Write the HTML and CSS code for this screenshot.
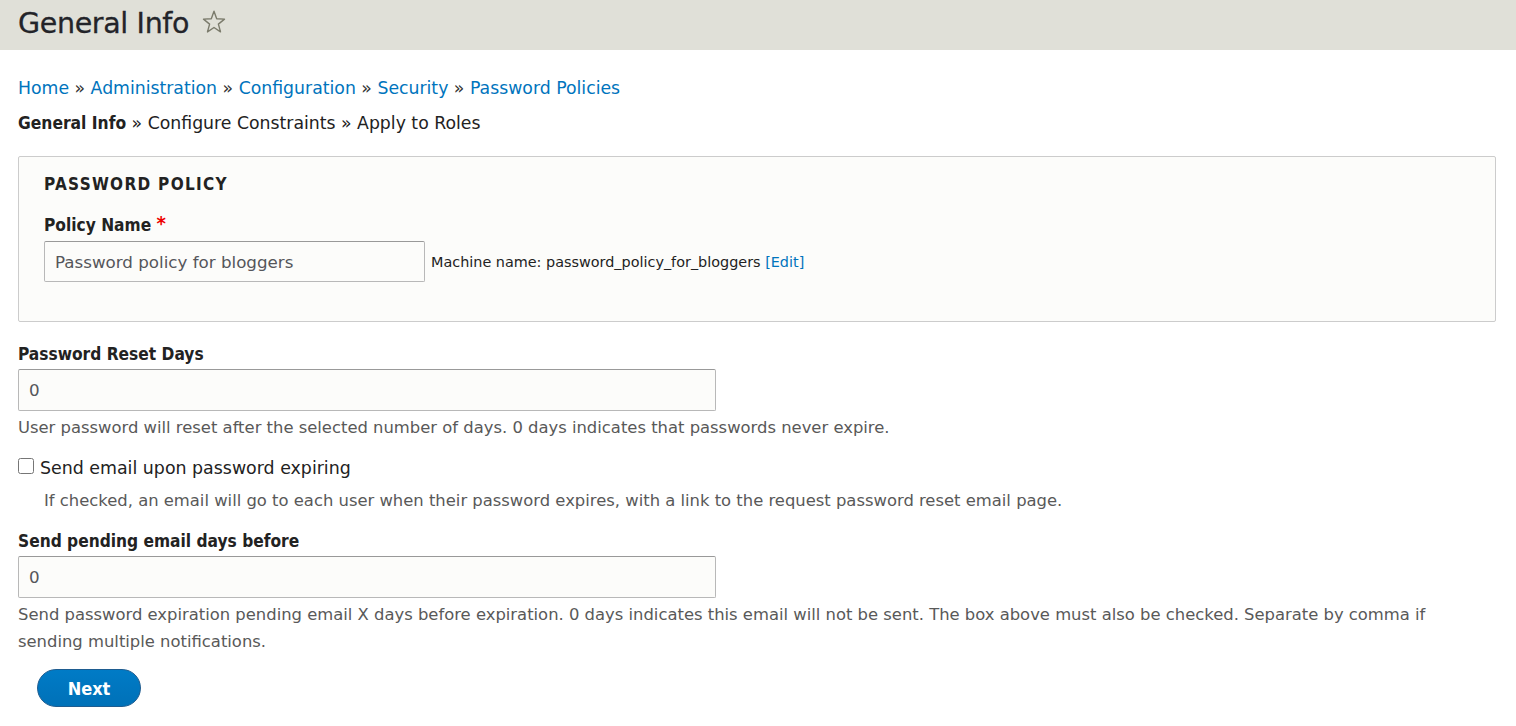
FILE: index.html
```html
<!DOCTYPE html>
<html lang="en">
<head>
<meta charset="utf-8">
<title>General Info</title>
<link rel="stylesheet" href="styles.css">
</head>
<body>
<header class="page-header">
  <h1 class="page-title">General Info</h1>
  <svg class="star" width="26" height="26" viewBox="0 0 26 26" aria-hidden="true">
    <path d="M13 2.2 L15.7 9.7 L23.5 10.1 L17.4 15.1 L19.5 22.9 L13 18.5 L6.5 22.9 L8.6 15.1 L2.5 10.1 L10.3 9.7 Z" fill="none" stroke="#7b7b6c" stroke-width="1.4" stroke-linejoin="round"/>
  </svg>
</header>
<main class="content">
  <nav class="breadcrumb">
    <a href="#">Home</a> » <a href="#">Administration</a> » <a href="#">Configuration</a> » <a href="#">Security</a> » <a href="#">Password Policies</a>
  </nav>
  <div class="steps"><strong>General Info</strong> » Configure Constraints » Apply to Roles</div>

  <section class="fieldset">
    <div class="legend">Password Policy</div>
    <label class="label">Policy Name <span class="req">*</span></label>
    <div class="machine-row">
      <input class="text-input short" type="text" value="Password policy for bloggers">
      <span class="machine">Machine name: password_policy_for_bloggers <a href="#">[Edit]</a></span>
    </div>
  </section>

  <div class="field">
    <label class="label">Password Reset Days</label>
    <input class="text-input wide" type="text" value="0">
    <div class="description">User password will reset after the selected number of days. 0 days indicates that passwords never expire.</div>
  </div>

  <div class="field check-field">
    <label class="check-label"><input type="checkbox" class="checkbox"> Send email upon password expiring</label>
    <div class="description indent">If checked, an email will go to each user when their password expires, with a link to the request password reset email page.</div>
  </div>

  <div class="field pending">
    <label class="label">Send pending email days before</label>
    <input class="text-input wide" type="text" value="0">
    <div class="description">Send password expiration pending email X days before expiration. 0 days indicates this email will not be sent. The box above must also be checked. Separate by comma if sending multiple notifications.</div>
  </div>

  <div class="actions">
    <button class="button" type="button">Next</button>
  </div>
</main>
</body>
</html>
```

FILE: styles.css
```css
html, body {
  margin: 0;
  padding: 0;
  background: #fff;
}
body {
  font-family: "DejaVu Sans", "Liberation Sans", sans-serif;
  color: #222330;
  font-size: 17.3px;
}
.page-header {
  background: #e0e0d8;
  height: 50px;
  display: flex;
  align-items: center;
  padding-left: 18px;
  box-sizing: border-box;
}
.page-title {
  margin: 0;
  font-size: 28.5px;
  font-weight: normal;
  letter-spacing: -0.35px;
  color: #232429;
  line-height: 1;
  padding-bottom: 2px;
  -webkit-text-stroke: 0.3px #232429;
}
.star {
  margin-left: 12px;
  margin-bottom: 6px;
}
.content {
  padding: 0 20px 0 18px;
}
a {
  color: #0074bd;
  text-decoration: none;
}
.breadcrumb {
  margin-top: 26px;
  line-height: 24px;
  color: #333;
}
.steps {
  margin-top: 11px;
  line-height: 24px;
  color: #222;
}
.steps strong {
  font-family: "DejaVu Sans Condensed", "DejaVu Sans", sans-serif;
  font-weight: bold;
}
.fieldset {
  margin-top: 21px;
  background: #fcfcfa;
  border: 1px solid #ccc;
  border-radius: 2px;
  padding: 15px 25px 39px 25px;
}
.legend {
  text-transform: uppercase;
  font-family: "DejaVu Sans Condensed", "DejaVu Sans", sans-serif;
  font-weight: bold;
  font-size: 17px;
  letter-spacing: 1.3px;
  line-height: 24px;
  color: #222;
}
.label {
  display: block;
  font-family: "DejaVu Sans Condensed", "DejaVu Sans", sans-serif;
  font-weight: bold;
  font-size: 17.2px;
  line-height: 24px;
  color: #222;
}
.fieldset .label {
  margin-top: 17px;
}
.req {
  color: #e00;
  font-size: 20px;
  vertical-align: top;
  line-height: 20px;
}
.machine-row {
  display: flex;
  align-items: center;
  margin-top: 4px;
}
.text-input {
  box-sizing: border-box;
  height: 41px;
  background: #fcfcfa;
  border: 1px solid #b8b8b8;
  border-top-color: #999;
  border-radius: 2px;
  padding: 0 10px;
  font-family: "DejaVu Sans", sans-serif;
  font-size: 16.7px;
  color: #55565b;
  display: block;
}
.short {
  width: 381px;
}
.wide {
  width: 698px;
  height: 42px;
  margin-top: 3px;
}
.machine {
  margin-left: 6px;
  font-size: 14.4px;
  color: #222;
}
.field {
  margin-top: 20px;
}
.description {
  margin-top: 3px;
  margin-right: 4px;
  font-size: 16.4px;
  line-height: 27px;
  color: #595959;
}
.check-field {
  margin-top: 15px;
}
.check-label {
  display: flex;
  align-items: center;
  font-size: 17.4px;
  line-height: 24px;
  color: #222;
}
.checkbox {
  width: 16px;
  height: 16px;
  margin: 0 6px 4px 0;
}
.indent {
  margin-top: 7px;
  padding-left: 26px;
}
.pending {
  margin-top: 15px;
}
.actions {
  margin-top: 14px;
  padding-left: 19px;
  padding-bottom: 20px;
}
.button {
  width: 104px;
  height: 38px;
  border-radius: 20px;
  background: linear-gradient(#007bc6, #0071b8);
  border: 1px solid #1e5c90;
  color: #fff;
  font-family: "DejaVu Sans Condensed", "DejaVu Sans", sans-serif;
  font-weight: bold;
  font-size: 18px;
  cursor: pointer;
}
```
